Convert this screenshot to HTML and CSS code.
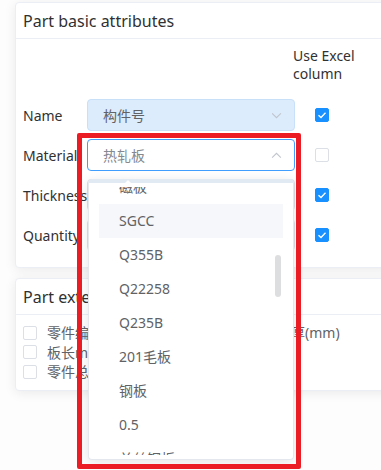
FILE: index.html
```html
<!DOCTYPE html>
<html lang="en">
  <head>
    <meta charset="UTF-8" />
    <meta name="viewport" content="width=device-width, initial-scale=1.0" />
    <title>Part attributes</title>
    <link rel="stylesheet" href="styles.css">
  </head>
  <body>
    <div class="page">
      <div class="card">
        <div class="card-header">Part basic attributes</div>
        <div class="card-body">
          <div class="form-row head-row">
            <span class="label"></span>
            <span class="select-space"></span>
            <span class="col-title">Use Excel column</span>
          </div>

          <div class="form-row">
            <span class="label">Name</span>
            <div class="select is-readonly">
              <span class="select-value">构件号</span>
              <svg class="chevron" viewBox="0 0 12 8"><path d="M1 1.5 L6 6.5 L11 1.5" /></svg>
            </div>
            <span class="check is-checked"><svg viewBox="0 0 14 14"><path d="M3.5 7.2 L6 9.5 L10.5 4.8" /></svg></span>
          </div>

          <div class="form-row">
            <span class="label">Material</span>
            <div class="select is-focus">
              <span class="select-value">热轧板</span>
              <svg class="chevron" viewBox="0 0 12 8"><path d="M1 6.5 L6 1.5 L11 6.5" /></svg>
            </div>
            <span class="check"></span>
          </div>

          <div class="form-row">
            <span class="label">Thickness</span>
            <div class="select">
              <span class="select-value">板厚</span>
            </div>
            <span class="check is-checked"><svg viewBox="0 0 14 14"><path d="M3.5 7.2 L6 9.5 L10.5 4.8" /></svg></span>
          </div>

          <div class="form-row">
            <span class="label">Quantity</span>
            <div class="select">
              <span class="select-value">数量</span>
            </div>
            <span class="check is-checked"><svg viewBox="0 0 14 14"><path d="M3.5 7.2 L6 9.5 L10.5 4.8" /></svg></span>
          </div>
        </div>
      </div>

      <div class="card">
        <div class="card-header">Part extended attributes</div>
        <div class="card-body ext-body">
          <label class="ext-item"><span class="check"></span>零件编号</label>
          <label class="ext-item"><span class="check"></span>板厚(mm)</label>
          <label class="ext-item"><span class="check"></span>板长mm</label>
          <span></span>
          <label class="ext-item"><span class="check"></span>零件总数</label>
        </div>
      </div>
    </div>

    <!-- material dropdown, open under the Material select -->
    <div class="dropdown">
      <span class="dropdown-arrow"></span>
      <div class="dropdown-scroll">
        <ul class="option-list">
          <li>磁板</li>
          <li class="is-hover">SGCC</li>
          <li>Q355B</li>
          <li>Q22258</li>
          <li>Q235B</li>
          <li>201毛板</li>
          <li>钢板</li>
          <li>0.5</li>
          <li>单丝钢板</li>
        </ul>
        <span class="scroll-thumb"></span>
      </div>
    </div>

    <div class="highlight"></div>
  </body>
</html>
```

FILE: styles.css
```css
html,
body {
  margin: 0;
  padding: 0;
  overflow: hidden;
}

body {
  font-family: "Noto Sans", "Noto Sans CJK SC", sans-serif;
  font-size: 14px;
  color: #303133;
  background: #fdfdfd;
  height: 470px;
  position: relative;
}

.page {
  width: 430px;
  padding: 2px 0 0 15px;
}

.card {
  background: #fff;
  border: 1px solid #ebeef5;
  border-radius: 4px;
  box-shadow: 0 2px 12px rgba(0, 0, 0, 0.08);
  margin-bottom: 10px;
}

.card-header {
  font-size: 16px;
  line-height: 22px;
  padding: 7px 7px 6px;
  border-bottom: 1px solid #ebeef5;
}

.card-body {
  padding: 8px 7px 16px;
}

.form-row {
  display: flex;
  align-items: center;
  height: 32px;
  margin-bottom: 8px;
}

.form-row:last-child {
  margin-bottom: 0;
}

.head-row {
  height: auto;
  margin-bottom: 16px;
  align-items: flex-start;
}

.label {
  width: 64px;
  flex: none;
  white-space: nowrap;
}

.select-space {
  width: 206px;
  flex: none;
}

.col-title {
  width: 72px;
  line-height: 18px;
}

.select {
  width: 208px;
  height: 32px;
  box-sizing: border-box;
  border: 1px solid #dcdfe6;
  border-radius: 4px;
  background: #fff;
  display: flex;
  align-items: center;
  justify-content: space-between;
  padding: 0 12px 0 15px;
  color: #606266;
  flex: none;
}

.select.is-readonly {
  background: #dcecfc;
  border-color: #c8e0f8;
}

.select.is-focus {
  border-color: #409eff;
  color: #85888e;
}

.chevron {
  width: 11px;
  height: 7px;
  fill: none;
  stroke: #c0c4cc;
  stroke-width: 1.2;
}

.check {
  width: 14px;
  height: 14px;
  box-sizing: border-box;
  border: 1px solid #dcdfe6;
  border-radius: 2px;
  background: #fff;
  margin-left: 20px;
  flex: none;
  display: inline-flex;
}

.check svg {
  width: 14px;
  height: 14px;
  margin: -1px;
  fill: none;
  stroke: #fff;
  stroke-width: 1.3;
}

.check.is-checked {
  background: #1890ff;
  border-color: #1890ff;
}

.ext-body {
  display: grid;
  grid-template-columns: 230px auto;
  padding: 8px 7px;
  color: #606266;
}

.ext-item {
  display: flex;
  align-items: center;
  line-height: 19.5px;
  white-space: nowrap;
}

.ext-item .check {
  margin: 0 10px 0 0;
}

/* dropdown */
.dropdown {
  position: absolute;
  left: 88px;
  top: 179px;
  width: 206px;
  height: 281px;
  box-sizing: border-box;
  padding: 4px 0;
  background: #fff;
  border: 1px solid #e4e7ed;
  border-top: 4px solid #e1e9f3;
  border-radius: 4px;
  box-shadow: 0 2px 12px rgba(0, 0, 0, 0.1);
}

.dropdown-arrow {
  position: absolute;
  left: 34px;
  top: -8px;
  width: 0;
  height: 0;
  border: 5px solid transparent;
  border-bottom-color: #fff;
}

.dropdown-scroll {
  position: relative;
  height: 100%;
  overflow: hidden;
}

.option-list {
  list-style: none;
  margin: -17px 0 0;
  padding: 0;
}

.option-list li {
  height: 34px;
  line-height: 34px;
  margin: 0 10px;
  padding-left: 20px;
  color: #606266;
  white-space: nowrap;
}

.option-list li.is-hover {
  background: #f5f7fa;
}

.scroll-thumb {
  position: absolute;
  right: 12px;
  top: 68px;
  width: 6px;
  height: 42px;
  border-radius: 3px;
  background: #dddee0;
}

.highlight {
  position: absolute;
  left: 77px;
  top: 133px;
  width: 224px;
  height: 336px;
  box-sizing: border-box;
  border: 5px solid #eb1c24;
  border-radius: 2px;
}
```
